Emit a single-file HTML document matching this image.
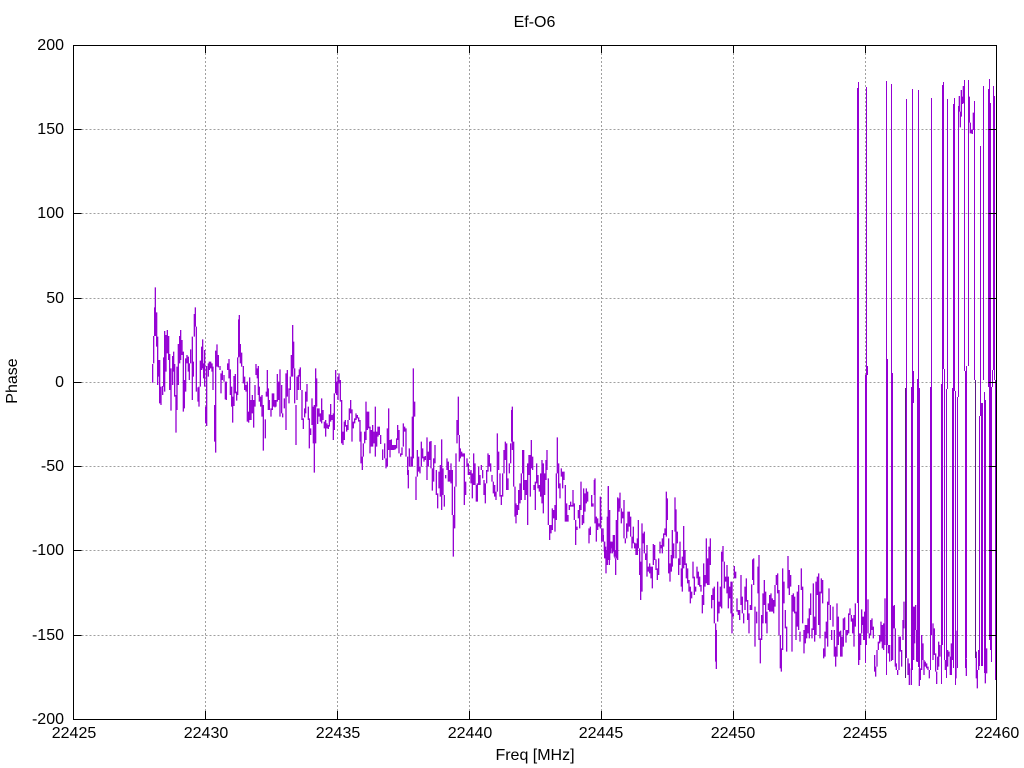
<!DOCTYPE html>
<html><head><meta charset="utf-8"><title>Ef-O6</title>
<style>html,body{margin:0;padding:0;background:#fff}svg{display:block}text{font-family:"Liberation Sans",Arial,sans-serif;font-size:16px;fill:#000}</style>
</head><body>
<svg width="1024" height="768" viewBox="0 0 1024 768" xmlns="http://www.w3.org/2000/svg">
<rect width="1024" height="768" fill="#fff"/>
<g stroke="#a0a0a0" stroke-width="1" stroke-dasharray="2 2" fill="none" shape-rendering="crispEdges">
<path d="M73.5 129.5H996M73.5 213.5H996M73.5 298.5H996M73.5 382.5H996M73.5 466.5H996M73.5 550.5H996M73.5 635.5H996"/>
<path d="M205.5 45V719M337.5 45V719M469.5 45V719M601.5 45V719M733.5 45V719M865.5 45V719"/>
</g>
<g fill="none" stroke="#9400d3">
<path transform="translate(140,280) scale(.33333)" stroke-width="3.9" d="M38 252V308M41 168V250M44 82V168M46 22V168M50 97V200M53 170V315M56 240V290M59 240V370M63 320V375M68 318V345M71 232V320M74 153V335M78 165V275M82 150V220M86 168V240M89 222V330M93 265V392M98 228V315M101 215V275M104 252V350M108 345V458M111 260V390M115 192V315M119 168V250M122 150V240M126 180V225M130 215V395M133 300V385M137 235V335M141 225V250M145 230V275M148 250V300M152 208V250M157 170V360M160 245V290M163 102V170M166 82V140M169 140V335M174 322V365M177 320V380M181 242V320M185 200V270M188 178V265M191 250V295M194 210V320M197 380V430M200 258V438M205 250V290M208 245V270M212 245V265M216 250V275M219 260V330M224 375V485M227 212V518M231 193V260M235 225V262M240 258V270M243 280V340M247 272V300M252 285V305M256 305V358M259 305V360M263 250V270M267 237V295M271 268V345M275 320V380M278 350V428M282 288V378M286 282V340M290 335V362M293 232V345M296 118V232M298 105V230M301 192V250M305 218V260M310 258V310M314 290V330M318 315V335M322 305V425M326 395V428M329 292V420M333 360V420M337 345V400M341 360V443M345 315V380M348 252V285M352 265V295M355 258V345M358 320V365M362 350V380M366 345V410M370 375V512M376 418V475M379 335V350M382 270V350M385 325V390M388 360V390M393 385V410M397 340V390M401 340V380M405 360V382M408 360V380M412 282V365M416 305V360M420 268V410M425 315V400M428 400V412M433 355V385M438 280V450M442 270V350M447 325V370M451 290V330M454 225V290M458 135V290M461 185V265M464 265V370M468 375V495M471 290V360M475 285V330M478 268V290M481 262V330M486 330V420M490 415V447M494 385V412M497 335V400M501 312V365M505 380V420M508 415V505M512 445V465M516 355V435M520 380V490M523 375V578M527 265V490M530 295V380M533 385V432M537 385V410M541 400V425M545 355V430M549 390V420M553 425V445M557 420V470M561 430V445M565 435V447M568 403V440M572 372V425M576 405V420M580 400V480M583 340V450M587 270V340M590 305V345M594 290V360M597 280V310M601 300V365M605 360V490M609 455V495M613 425V480M616 420V440M620 435V455M624 420V450M628 385V420M632 360V400M636 388V485M640 425V445M644 415V430M648 400V420M652 405V415M656 412V425M660 420V485M663 455V550M667 530V570M670 490V530M674 455V490M678 365V480M682 395V450M686 395V445M690 440V520M694 450V500M698 435V500M702 455V490M706 380V530M710 455V500M714 440V470M718 440V465"/>
<path transform="translate(380,360) scale(.33333)" stroke-width="3.9" d="M2 225V252M8 268V300M14 250V295M18 295V325M22 205V320M26 145V270M30 240V292M34 238V270M38 255V270M42 255V270M46 255V268M50 235V265M53 195V240M57 210V280M62 280V290M66 262V285M70 190V260M74 200V215M78 205V290M83 290V345M85 330V385M88 265V320M93 290V320M97 170V320M100 25V295M104 125V170M108 350V420M112 270V350M116 290V335M120 320V340M124 245V320M128 265V295M132 290V305M136 288V300M141 232V360M145 275V320M149 245V300M153 243V325M157 325V392M161 295V365M165 255V310M169 330V405M173 400V445M177 335V385M181 315V410M185 238V450M189 325V405M193 405V440M197 345V355M201 295V330M205 305V365M209 330V365M213 310V370M217 330V465M220 465V590M224 380V505M228 280V380M231 180V250M235 110V225M238 225V305M241 265V295M245 275V290M249 280V290M253 280V435M257 365V405M261 295V320M265 310V345M269 335V345M273 330V370M277 340V415M281 280V375M285 310V375M289 375V425M292 370V425M296 320V375M300 345V375M304 315V330M308 330V355M312 360V405M316 370V430M320 330V370M324 280V335M328 285V320M332 310V335M336 345V365M340 365V400M344 375V410M348 395V420M352 220V395M356 275V330M360 340V410M364 405V435M368 340V410M372 270V340M376 245V300M380 250V390M384 355V390M388 310V340M392 250V310M395 150V245M397 140V270M401 245V380M405 380V470M408 430V490M412 435V465M416 390V450M420 370V430M424 340V420M428 270V340M431 270V390M435 360V420M439 360V405M443 310V495M447 285V345M451 285V410M454 240V325M458 290V330M462 375V390M466 365V450M470 310V370M474 345V385M478 375V395M482 340V410M486 300V430M490 310V460M494 340V405M498 300V360M501 270V330M505 355V495M509 495V540M513 495V520M517 445V510M521 450V475M525 435V515M529 340V480M532 232V340M536 310V385M540 370V415M544 325V350M548 335V385M552 335V360M556 375V485M560 430V485M564 465V485M568 435V450M572 425V440M576 435V440M579 390V440M583 430V480M587 480V555M591 500V510M595 450V475M599 435V505M603 365V450M607 465V495M611 385V490M615 400V455M619 385V430M623 395V425M627 505V550M631 500V525M635 405V440M639 430V440M643 360V405M645 355V490M649 470V545M653 475V510M657 490V500M661 410V505M665 470V480M669 505V545M673 545V575M677 560V595M681 590V600M685 378V600M689 450V600M693 545V560M697 545V580M701 525V570M705 570V595M709 480V590M713 455V600M717 415V455"/>
<path transform="translate(600,470) scale(.33333)" stroke-width="3.9" d="M2 82V175M5 175V215M10 195V215M14 215V265M18 240V310M22 140V285M25 50V200M28 125V285M32 215V250M36 220V235M40 195V245M43 195V260M47 265V315M50 150V265M53 82V150M57 88V125M60 68V115M64 115V160M68 125V145M72 90V205M76 205V220M80 160V205M84 125V185M88 125V170M92 140V200M96 200V235M100 170V220M104 218V235M108 220V255M112 205V255M115 150V235M119 235V315M122 275V390M126 160V365M130 190V220M133 185V250M137 250V270M141 225V320M145 290V305M149 280V310M153 290V325M157 290V355M160 222V285M164 225V270M168 268V300M172 295V330M176 265V315M180 215V250M184 225V235M187 205V250M191 190V230M195 175V195M199 65V200M202 85V150M206 205V310M210 280V335M214 255V305M217 180V290M221 220V265M225 82V185M228 118V265M232 185V220M236 265V315M240 215V285M244 295V350M247 260V365M251 168V295M255 240V285M259 280V325M263 295V340M267 330V365M271 350V400M275 365V385M279 275V325M283 320V375M287 350V365M291 290V325M295 305V345M299 320V350M303 345V365M307 375V430M311 280V405M315 315V350M319 205V340M323 265V345M327 230V345M331 205V285M335 375V415M339 355V390M343 350V460M347 460V575M349 480V597M353 335V455M357 395V430M361 350V410M365 245V415M369 228V275M373 275V355M377 320V335M381 285V370M385 320V415M389 350V385M393 335V430M396 335V490M400 430V440M403 288V325M407 305V325M411 385V425M415 420V435M419 420V450M423 315V405M427 380V430M431 430V460M435 350V420M439 325V395M443 390V450M447 430V490M451 405V420M455 343V420M458 268V330M461 265V345M465 410V530M470 425V460M474 290V370M477 255V510M481 505V580M485 435V510M489 370V460M493 330V405M497 365V460M501 425V490M505 400V420M509 375V425M513 370V425M517 385V425M521 390V430M525 345V410M529 315V345M533 310V370M537 360V495M541 495V595M544 535V605M548 295V540M552 335V400M556 420V475M560 470V545M564 258V355M568 300V375M572 315V350M576 375V545M580 370V425M584 380V430M588 425V510M592 365V470M596 345V480M600 485V515M604 295V360M608 350V460M612 480V550M616 465V520M620 465V505M624 445V490M628 415V505M632 370V435M636 475V505M640 340V480M644 440V515M648 335V495M652 320V375M656 310V465M660 365V505M664 325V370M668 330V400M671 535V565M675 485V560M679 455V505M683 395V530M687 355V405M691 405V450M695 480V510M699 410V470M703 480V560M707 530V590M711 400V560M715 440V525M719 485V500"/>
<path transform="translate(840,560) scale(.33333)" stroke-width="3.9" d="M2 212V290M6 230V290M10 175V260M14 172V210M18 210V248M22 210V225M26 160V220M30 145V165M34 165V185M38 175V220M42 165V260M46 130V200M56 255V315M59 220V300M62 220V255M65 148V220M68 170V195M71 170V240M74 155V240M84 118V220M88 220V235M92 180V225M96 175V210M100 200V235M104 285V335M107 320V350M111 270V320M115 245V270M119 225V250M123 185V245M127 195V265M131 190V270M135 115V255M145 255V280M149 255V305M155 205V295M158 205V300M160 138V205M163 135V205M166 205V320M169 310V330M173 330V345M177 230V330M181 230V275M185 270V320M189 180V240M192 125V205M204 295V345M208 310V375M214 325V375M221 140V300M224 140V250M227 135V210M230 210V305M238 325V378M241 325V360M245 225V330M249 250V300M252 300V345M256 305V320M260 310V325M264 320V330M268 330V355M279 190V300M283 205V285M287 280V335M290 335V372M293 290V330M296 245V320M300 255V290M316 300V330M323 270V320M327 275V290M331 290V345M334 250V345M348 212V355M379 295V348M409 275V355M412 330V385M416 270V330M436 180V370M440 265V340"/>
<path transform="translate(840,70) scale(.33333)" stroke-width="3.9" d="M358 78V125M361 125V172M364 60V140M367 80V102M370 48V100M388 80V158M391 158V190M394 180V190M397 178V192M400 128V180"/>
<g shape-rendering="crispEdges">
<path stroke-width="1" d="M857.5 88V603M858.5 82V665M865.5 375V663M866.5 87V645M867.5 366V375M886.5 81V675M887.5 359V645M891.5 84V661M892.5 373V658M906.5 99V658M911.5 387V673M912.5 89V670M913.5 371V403M917.5 379V662M918.5 90V667M919.5 388V670M930.5 387V670M931.5 98V635M941.5 384V684M942.5 85V645M943.5 82V369M944.5 369V660M946.5 389V678M947.5 99V389M952.5 388V660M953.5 104V668M954.5 98V391M955.5 391V685M957.5 397V668M958.5 106V397M964.5 80V371M965.5 371V668M966.5 366V658M968.5 80V366M974.5 101V380M979.5 416V666M980.5 146V416M981.5 403V666M982.5 403V666M983.5 86V380M984.5 392V673M985.5 400V683M988.5 89V387M989.5 79V640M990.5 103V650M991.5 387V662M992.5 370V387M993.5 86V370M994.5 96V380M995.5 380V680"/>
<path stroke="#5a1a85" stroke-width="1" d="M905.5 388V678M975.5 380V658"/>
</g>
</g>
<g fill="none" stroke="#000" stroke-width="1" shape-rendering="crispEdges">
<path d="M73.5 45.5H996.5V719.5H73.5Z"/>
<path d="M73.5 129.5h8M996.5 129.5h-8M73.5 213.5h8M996.5 213.5h-8M73.5 298.5h8M996.5 298.5h-8M73.5 382.5h8M996.5 382.5h-8M73.5 466.5h8M996.5 466.5h-8M73.5 550.5h8M996.5 550.5h-8M73.5 635.5h8M996.5 635.5h-8"/>
<path d="M205.5 45v8M205.5 719v-8M337.5 45v8M337.5 719v-8M469.5 45v8M469.5 719v-8M601.5 45v8M601.5 719v-8M733.5 45v8M733.5 719v-8M865.5 45v8M865.5 719v-8"/>
</g>
<text x="534.5" y="27" text-anchor="middle">Ef-O6</text>
<g text-anchor="end">
<text x="64" y="50">200</text><text x="64" y="134">150</text><text x="64" y="218">100</text><text x="64" y="303">50</text><text x="64" y="387">0</text><text x="64" y="471">-50</text><text x="64" y="555">-100</text><text x="64" y="640">-150</text><text x="64" y="724">-200</text>
</g>
<g text-anchor="middle">
<text x="74" y="738">22425</text><text x="206" y="738">22430</text><text x="338" y="738">22435</text><text x="470" y="738">22440</text><text x="601" y="738">22445</text><text x="733" y="738">22450</text><text x="865" y="738">22455</text><text x="997" y="738">22460</text>
<text x="535" y="760">Freq [MHz]</text>
<text transform="translate(17,381) rotate(-90)">Phase</text>
</g>
</svg>
</body></html>
